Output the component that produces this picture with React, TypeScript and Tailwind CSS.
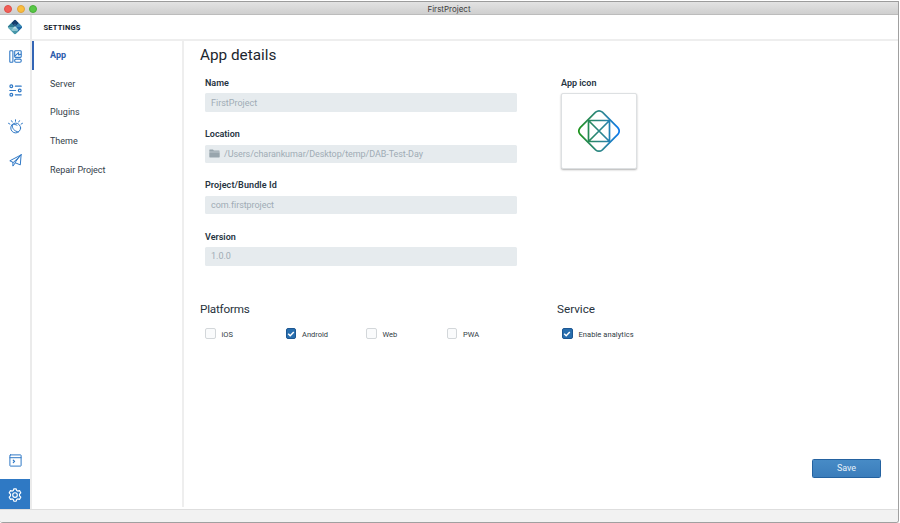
import React from "react";

function Logo() {
  return (
    <svg width="16" height="16" viewBox="0 0 16 16">
      <defs>
        <clipPath id="diamond">
          <rect x="2.6" y="2.6" width="10.8" height="10.8" rx="1.3" transform="rotate(45 8 8)" />
        </clipPath>
      </defs>
      <g clipPath="url(#diamond)">
        <path d="M0 0h16v16H0z" fill="#5fa9ba" />
        <path d="M8 0l4 4-4 4-4-4z" fill="#143d6c" />
        <path d="M4 4l4 4H0z" fill="#2f7b93" />
        <path d="M0 8h8l-4 4z" fill="#65adbb" />
        <path d="M12 4l4 4H8z" fill="#3a86b3" />
        <path d="M12 8h4l-6 6-2-6z" fill="#1d66a5" />
        <path d="M8 7.2L11.6 10.8 8 14.4 4.4 10.8z" fill="#8cc5d0" />
        <path d="M8 7.2l2.4 2.4H5.6z" fill="#bfe3e8" />
        <path d="M8 4.4l1.6 1.6L8 7.6 6.4 6z" fill="#2c5f8c" />
        <path d="M8 16l4-4H4z" fill="#4797a9" />
      </g>
    </svg>
  );
}

const stroke = { fill: "none", stroke: "#3079c6", strokeWidth: 1, strokeLinecap: "round", strokeLinejoin: "round" } as const;

function LayoutIcon() {
  return (
    <svg width="13" height="13" viewBox="0 0 13 13" {...stroke} strokeWidth="1.1">
      <rect x=".8" y=".8" width="3.1" height="11.4" rx=".7" />
      <rect x="5.7" y=".8" width="6.5" height="6.6" rx=".8" />
      <path d="M6 5.8l3.6-3.2M9.6 2.8l.1 2.3 2.2-.9" />
      <rect x="5.7" y="9.1" width="6.5" height="3.1" rx="1.2" />
    </svg>
  );
}

function SlidersIcon() {
  return (
    <svg width="13" height="13" viewBox="0 0 13 13" {...stroke} strokeWidth="1.2">
      <circle cx="2.3" cy="2.2" r="1.4" />
      <path d="M6.4 2.2h5.8M.8 6.5h5.8M6.4 10.8h5.8" />
      <circle cx="10.7" cy="6.5" r="1.4" />
      <circle cx="2.3" cy="10.8" r="1.4" />
    </svg>
  );
}

function WatsonIcon() {
  return (
    <svg width="15" height="15" viewBox="0 0 15 15" {...stroke}>
      <circle cx="7.7" cy="9" r="4.9" />
      <path d="M4.2 5.8c-.3 3.6 2.2 6.8 6.2 7M4.3 5.9c1.7-.7 3.4-.5 4.7.3M7.5 2.3V.8M4.3 3l-.8-1.3M10.7 3l.8-1.3M1.9 5.1L.5 4.3M13.1 5.1l1.4-.8" />
    </svg>
  );
}

function PlaneIcon() {
  return (
    <svg width="13" height="13" viewBox="0 0 13 13" {...stroke}>
      <path d="M12.1.9L.8 6.8l3.1 1.5zM12.1.9L11.3 10.9 6.3 8.8zM3.9 8.3v3.8l2.4-3.3" />
    </svg>
  );
}

function TerminalIcon() {
  return (
    <svg width="13" height="13" viewBox="0 0 13 13" {...stroke}>
      <rect x=".9" y=".9" width="11.2" height="11.2" rx=".5" />
      <path d="M1 3.7h11" />
      <path d="M4.3 6.2l1.3 1.2-1.3 1.3" strokeWidth="1.2" />
    </svg>
  );
}

function GearIcon() {
  return (
    <svg width="14" height="14" viewBox="0 0 14 14" fill="none" stroke="#fff" strokeWidth="1.15" strokeLinejoin="round">
      <path d="M5.8.8h2.4l.5 1.7 1 .6 1.8-.5 1.3 2.2-1.3 1.4v1.6l1.3 1.4-1.3 2.2-1.8-.5-1 .6-.5 1.7H5.8l-.5-1.7-1-.6-1.8.5-1.3-2.2 1.3-1.4V6.2L1.2 4.8l1.3-2.2 1.8.5 1-.6z" />
      <circle cx="7" cy="7" r="2.3" />
    </svg>
  );
}

function AppIcon() {
  return (
    <svg width="44" height="44" viewBox="0 0 44 44" fill="none" stroke="url(#appGradient)" strokeWidth="1.7">
      <defs>
        <linearGradient id="appGradient" gradientUnits="userSpaceOnUse" x1="1" y1="0" x2="43" y2="0">
          <stop stopColor="#1c9418" />
          <stop offset=".3" stopColor="#298862" />
          <stop offset=".65" stopColor="#2b849d" />
          <stop offset="1" stopColor="#0878f2" />
        </linearGradient>
      </defs>
      <path d="M18.6 3.2Q22 .4 25.4 3.2L40.8 18.6Q43.6 22 40.8 25.4L25.4 40.8Q22 43.6 18.6 40.8L3.2 25.4Q.4 22 3.2 18.6Z" />
      <path d="M11.5 11.5h21v21h-21zM11.5 11.5l21 21M32.5 11.5l-21 21" />
    </svg>
  );
}

function FolderIcon() {
  return (
    <svg className="mr-[4px]" width="11" height="9" viewBox="0 0 11 9" fill="#98a5ad">
      <path d="M.3 1.2Q.3.6.9.6h3l1 1h5.2q.5 0 .5.5v.6H.3zM.3 3.3h10.4v4.5q0 .6-.6.6H.9q-.6 0-.6-.6z" />
    </svg>
  );
}

function Field({ label, labelClass, value, valueClass, folder }: { label: string; labelClass: string; value: string; valueClass: string; folder?: boolean }) {
  return (
    <div className="h-[51.2px]">
      <div className={"h-[17.4px] text-[9px] font-semibold leading-[14px] text-[#26343f] " + labelClass}>{label}</div>
      <div className={"flex h-[18.6px] w-[312px] items-center rounded-[1.5px] bg-[#e6ebee] text-[9px] text-[#a0abb5] " + (folder ? "pl-[4px]" : "pl-[6px]")}>
        {folder && <FolderIcon />}
        <span className={"pt-[1.4px] " + valueClass}>{value}</span>
      </div>
    </div>
  );
}

function Check({ label, on, className, labelClass }: { label: string; on?: boolean; className: string; labelClass: string }) {
  return (
    <label className={"flex h-[11px] items-center text-[7.5px] text-[#303b44] " + className}>
      <span className={"mr-[6px] flex h-[10.5px] w-[10.5px] shrink-0 items-center justify-center rounded-[2px] border " + (on ? "border-[#1d5792] bg-[#286eae]" : "border-[#d3d7da] bg-[#fafbfc]")}>
        {on && (
          <svg width="8" height="8" viewBox="0 0 8 8" fill="none" stroke="#fff" strokeWidth="1.5">
            <path d="M1.2 3.8l2 2L6.8 2.1" />
          </svg>
        )}
      </span>
      <span className={"whitespace-nowrap pt-[2px] " + labelClass}>{label}</span>
    </label>
  );
}

export default function App() {
  return (
    <div className="h-[523px] w-[900px] bg-white pt-px pr-px">
      <div className="flex h-[522px] flex-col overflow-hidden rounded-b-[3px] border-r border-b border-[#a0a0a0] bg-white font-['Roboto','Noto_Sans',sans-serif]">
        <header className="flex h-[14px] shrink-0 items-center border-t border-b border-t-[#9c9c9c] border-b-[#bcbcbc] bg-linear-to-b from-[#e3e3e3] to-[#cfcfcf] pt-px">
          <div className="flex w-[380px] gap-[4.5px] pl-[4px]">
            <i className="h-2 w-2 rounded-full border border-[#de4e46] bg-[#f25f58]" />
            <i className="h-2 w-2 rounded-full border border-[#e0a33a] bg-[#fabe3e]" />
            <i className="h-2 w-2 rounded-full border border-[#48ad39] bg-[#58c846]" />
          </div>
          <div className="w-[138px] text-center font-['Inter','Roboto',sans-serif] text-[8px] leading-[10px] text-[#3e3e3e]">FirstProject</div>
        </header>
        <div className="flex min-h-0 flex-1">
          <aside className="flex w-[32px] shrink-0 flex-col border-r-2 border-[#ebebeb]">
            <div className="flex h-[25px] shrink-0 items-center justify-center border-b border-[#ebebeb]"><Logo /></div>
            <nav className="flex flex-col items-center">
              <span className="mt-[10px] h-[13px]"><LayoutIcon /></span>
              <span className="mt-[21px] h-[13px]"><SlidersIcon /></span>
              <span className="mt-[22px] h-[15px]"><WatsonIcon /></span>
              <span className="mt-[20px] h-[13px]"><PlaneIcon /></span>
            </nav>
            <div className="mt-auto flex flex-col items-center">
              <span className="mb-[12px] h-[13px]"><TerminalIcon /></span>
              <div className="flex h-[30px] w-[30px] items-center justify-center bg-[#2f79c4] pt-px"><GearIcon /></div>
            </div>
          </aside>
          <section className="flex min-w-0 flex-1 flex-col">
            <div className="h-[26px] shrink-0 border-b-2 border-[#eeeeee] pl-[11.5px] text-[7.5px] font-bold leading-[26px] tracking-[0.2px] text-[#15222c]">SETTINGS</div>
            <div className="flex min-h-0 flex-1">
              <nav className="mb-[2px] flex w-[152px] shrink-0 flex-col border-r-2 border-[#eeeeee] text-[9px] text-[#34414b]">
                <span className="h-[28.6px] border-l-2 border-[#3365b5] pl-[16px] font-bold leading-[28px] text-[#2c5cab]">App</span>
                <span className="h-[28.7px] pl-[18px] leading-[28px]">Server</span>
                <span className="h-[28.7px] pl-[18px] leading-[28px]">Plugins</span>
                <span className="h-[28.7px] pl-[18px] leading-[28px]">Theme</span>
                <span className="h-[28.7px] pl-[18px] leading-[29px] tracking-[-0.05px]">Repair Project</span>
              </nav>
              <main className="flex flex-1 flex-col pl-[16px]">
                <h1 className="h-[35px] pt-[4px] text-[15.3px] leading-[20px] text-[#1c262e]">App details</h1>
                <div className="flex h-[223px]">
                  <div className="w-[356px] pl-[5px]">
                    <Field label="Name" labelClass="" value="FirstProject" valueClass="" />
                    <Field label="Location" labelClass="tracking-[-0.03px]" value="/Users/charankumar/Desktop/temp/DAB-Test-Day" valueClass="tracking-[-0.08px]" folder />
                    <Field label="Project/Bundle Id" labelClass="tracking-[0.1px]" value="com.firstproject" valueClass="tracking-[-0.05px]" />
                    <Field label="Version" labelClass="" value="1.0.0" valueClass="" />
                  </div>
                  <div className="pl-[5px]">
                    <div className="h-[17px] text-[9px] font-semibold leading-[15px] text-[#26343f]">App icon</div>
                    <div className="flex h-[76px] w-[76px] items-center justify-center rounded-[2px] border border-[#dde0e2] bg-white shadow-[0_1px_2px_rgba(0,0,0,0.3)]"><AppIcon /></div>
                  </div>
                </div>
                <div className="flex">
                  <section className="w-[357px]">
                    <h2 className="h-[29px] text-[11.7px] leading-[20px] tracking-[-0.2px] text-[#26323c]">Platforms</h2>
                    <div className="flex pl-[5px]">
                      <Check label="iOS" className="w-[80.5px]" labelClass="" />
                      <Check label="Android" on className="w-[80.5px]" labelClass="" />
                      <Check label="Web" className="w-[80.5px]" labelClass="" />
                      <Check label="PWA" className="w-[80.5px]" labelClass="" />
                    </div>
                  </section>
                  <section>
                    <h2 className="h-[29px] text-[11.7px] leading-[20px] text-[#26323c]">Service</h2>
                    <Check label="Enable analytics" on className="pl-[5px]" labelClass="tracking-[0.07px]" />
                  </section>
                </div>
                <button className="mt-auto mr-[17px] mb-[31px] h-[19px] w-[69px] self-end rounded-[1.5px] border border-[#2462a0] bg-linear-to-b from-[#478bc6] to-[#3b7dbb] text-[9px] leading-[17px] text-[#e7f1fa]">Save</button>
              </main>
            </div>
          </section>
        </div>
        <footer className="h-[13px] shrink-0 border-t border-[#dedede] bg-[#f2f2f2]" />
      </div>
    </div>
  );
}
